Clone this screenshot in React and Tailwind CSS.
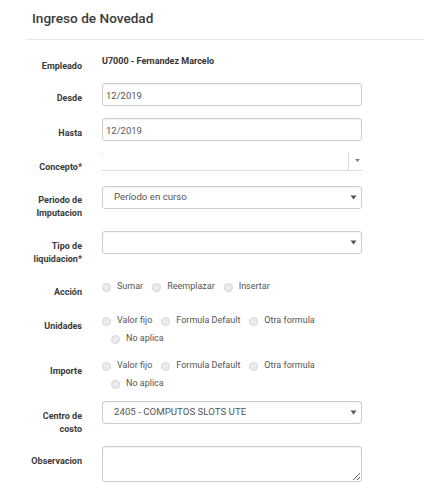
import React from "react";

const Arrow = ({ className = "" }) => (
    <svg width="7" height="5" viewBox="0 0 7 5" className={className}>
        <path d="M0.5 0.5 L6.5 0.5 L3.5 4.5 Z" fill="#555" />
    </svg>
);

const Radio = ({ label, first }) => (
    <label className={`inline-flex items-center h-[14px] ${first ? "" : "ml-[9px]"}`}>
        <span className="w-[9px] h-[9px] rounded-full border border-[#d4d4d4] bg-[#ebebeb] mr-[6px] shrink-0" />
        <span className="text-[9px] text-[#555] whitespace-nowrap">{label}</span>
    </label>
);

const Row = ({ label, h, labelPt = "pt-[9px]", children }) => (
    <div className="flex" style={{ height: h }}>
        <div className={`w-[56px] shrink-0 text-right text-[9px] font-bold leading-[13px] text-[#3a3a3a] ${labelPt}`}>
            {label}
        </div>
        <div className="ml-[20px] w-[260px]">{children}</div>
    </div>
);

const Select = ({ value }) => (
    <div className="h-[23px] border border-[#ccc] rounded-[3px] flex items-center justify-between pl-[11px] pr-[4px] shadow-[inset_0_1px_1px_rgba(0,0,0,0.04)]">
        <span className="text-[9.7px] text-[#555]">{value}</span>
        <Arrow />
    </div>
);

const Input = ({ value }) => (
    <div className="h-[23px] border border-[#ccc] rounded-[3px] flex items-center pl-[3px] pt-[3px] shadow-[inset_0_1px_1px_rgba(0,0,0,0.05)]">
        <span className="text-[9.5px] text-[#555]">{value}</span>
    </div>
);

export default function App() {
    return (
        <div className="w-[424px] h-[492px] bg-white overflow-hidden" style={{ fontFamily: "Roboto, 'Liberation Sans', sans-serif" }}>
            <div className="pl-[32px] pt-[10px] h-[39px]">
                <h1 className="text-[13.6px] font-medium text-[#3c3c3c] leading-[17px]">Ingreso de Novedad</h1>
            </div>
            <div className="ml-[26px] border-t border-[#e8e8e8]" />

            <div className="pl-[26px] pt-[14px]">
                <Row label="Empleado" h={29} labelPt="pt-[6px]">
                    <div className="text-[9px] font-bold text-[#333] leading-[13px] pt-[1px]">U7000 - Fernandez Marcelo</div>
                </Row>
                <Row label="Desde" h={35}>
                    <Input value="12/2019" />
                </Row>
                <Row label="Hasta" h={34}>
                    <Input value="12/2019" />
                </Row>
                <Row label="Concepto*" h={34}>
                    <div className="relative h-[19px] border-b border-[#ddd] flex justify-end">
                        <span className="absolute left-0 top-0 w-px h-[4px] bg-[#eee]" />
                        <div className="w-[14px] h-full border-l border-[#ddd] flex items-center justify-end pr-[1px] pb-[2px]">
                            <Arrow className="scale-75 opacity-80" />
                        </div>
                    </div>
                </Row>
                <Row label="Periodo de Imputacion" h={45} labelPt="pt-[8px]">
                    <Select value="Período en curso" />
                </Row>
                <Row label="Tipo de liquidacion*" h={49} labelPt="pt-[9px]">
                    <Select value="" />
                </Row>
                <Row label="Acción" h={34} labelPt="pt-[6px]">
                    <div className="flex flex-wrap">
                        <Radio label="Sumar" first />
                        <Radio label="Reemplazar" />
                        <Radio label="Insertar" />
                    </div>
                </Row>
                <Row label="Unidades" h={45} labelPt="pt-[6px]">
                    <div className="flex flex-wrap gap-y-[4px]">
                        <Radio label="Valor fijo" first />
                        <Radio label="Formula Default" />
                        <Radio label="Otra formula" />
                        <Radio label="No aplica" />
                    </div>
                </Row>
                <Row label="Importe" h={42} labelPt="pt-[6px]">
                    <div className="flex flex-wrap gap-y-[4px]">
                        <Radio label="Valor fijo" first />
                        <Radio label="Formula Default" />
                        <Radio label="Otra formula" />
                        <Radio label="No aplica" />
                    </div>
                </Row>
                <Row label="Centro de costo" h={45} labelPt="pt-[9px]">
                    <Select value="2405 - COMPUTOS SLOTS UTE" />
                </Row>
                <Row label="Observacion" h={40} labelPt="pt-[9px]">
                    <textarea className="block w-[260px] h-[36px] border border-[#ccc] rounded-[3px] shadow-[inset_0_1px_1px_rgba(0,0,0,0.05)] outline-none" />
                </Row>
            </div>
        </div>
    );
}
